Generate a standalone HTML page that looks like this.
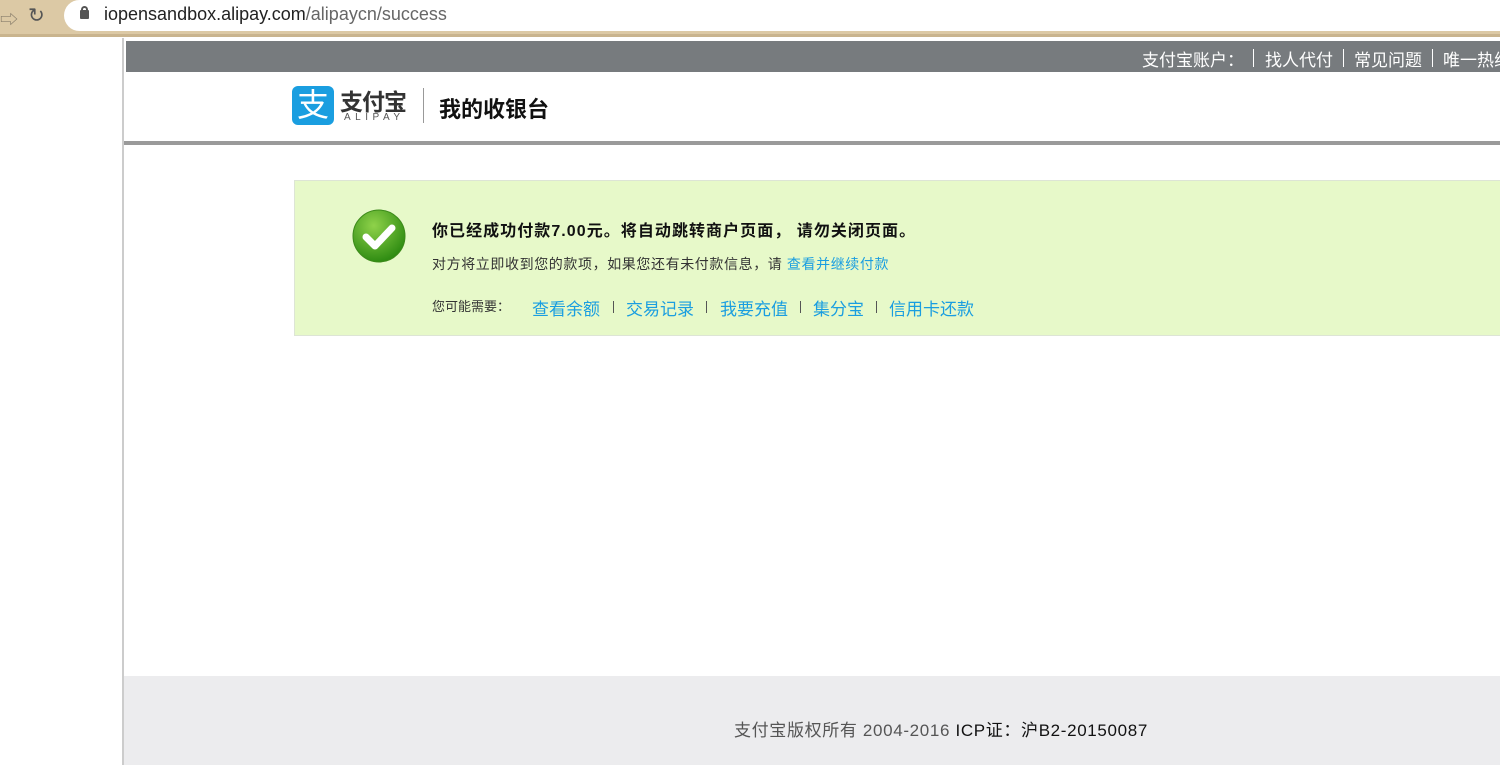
<!DOCTYPE html>
<html><head><meta charset="utf-8"><style>
*{margin:0;padding:0;box-sizing:border-box}
body{width:1500px;height:765px;overflow:hidden;background:#fff;font-family:"Liberation Sans","Noto Sans CJK SC",sans-serif;position:relative}
.abs{position:absolute;white-space:nowrap}
a{color:#1a9ee0;text-decoration:none}
.h{top:46px;font-size:17px;color:#fff}
.hs{top:49px;width:1px;height:18px;background:#fff}
.l{top:295px;font-size:17px;color:#1a9ee0}
.s{top:301px;width:1px;height:12px;background:#555}
</style></head><body>
<div class="abs" style="left:0;top:0;width:1500px;height:34px;background:#dcc9a5"></div>
<div class="abs" style="left:0;top:34px;width:1500px;height:3px;background:#c9b48e"></div>
<div class="abs" style="left:0;top:6px;font-size:18px;color:#8a7f6c">⇨</div>
<div class="abs" style="left:28px;top:3px;font-size:20px;color:#555">↻</div>
<div class="abs" style="left:64px;top:0;width:1440px;height:31px;background:#fff;border-radius:16px 0 0 16px"></div>
<div class="abs" style="left:80px;top:10px;width:9px;height:9px;background:#555;border-radius:1px"></div>
<div class="abs" style="left:81px;top:6px;width:7px;height:7px;border:2px solid #555;border-radius:4px 4px 0 0"></div>
<div class="abs" style="left:104px;top:4px;font-size:18px;color:#222">iopensandbox.alipay.com<span style="color:#666">/alipaycn/success</span></div>

<div class="abs" style="left:122px;top:38px;width:2px;height:727px;background:#ccc"></div>
<div class="abs" style="left:126px;top:41px;width:1374px;height:31px;background:#777b7e"></div>
<div class="abs h" style="left:1142px">支付宝账户：</div>
<div class="abs hs" style="left:1253px"></div>
<div class="abs h" style="left:1265px">找人代付</div>
<div class="abs hs" style="left:1343px"></div>
<div class="abs h" style="left:1354px">常见问题</div>
<div class="abs hs" style="left:1432px"></div>
<div class="abs h" style="left:1443px">唯一热线</div>
<div class="abs" style="left:124px;top:141px;width:1376px;height:4px;background:#9a9a9a"></div>

<div class="abs" style="left:292px;top:86px;width:42px;height:39px;background:#1a9ee0;border-radius:6px;color:#fff;font-size:32px;line-height:39px;text-align:center">支</div>
<div class="abs" style="left:340px;top:83px;font-size:23px;font-weight:bold;color:#333;letter-spacing:-1px">支付宝</div>
<div class="abs" style="left:344px;top:112px;font-size:10px;color:#555;letter-spacing:4.5px">ALIPAY</div>
<div class="abs" style="left:423px;top:88px;width:1px;height:35px;background:#999"></div>
<div class="abs" style="left:439px;top:92px;font-size:22px;font-weight:bold;color:#111">我的收银台</div>

<div class="abs" style="left:294px;top:180px;width:1210px;height:156px;background:#e7f9c9;border:1px solid #dde5d5"></div>
<svg class="abs" style="left:351px;top:209px" width="56" height="56" viewBox="0 0 56 56">
<defs><radialGradient id="g" cx="40%" cy="30%" r="70%"><stop offset="0" stop-color="#8fd24a"/><stop offset="1" stop-color="#2f8c12"/></radialGradient></defs>
<circle cx="28" cy="27" r="26" fill="url(#g)" stroke="#3c8a1a" stroke-width="1"/>
<path d="M15 28 L24 37 L41 19" fill="none" stroke="#fff" stroke-width="7" stroke-linecap="round" stroke-linejoin="round"/>
</svg>
<div class="abs" style="left:432px;top:217px;font-size:16px;font-weight:bold;color:#111;letter-spacing:1.05px">你已经成功付款7.00元。将自动跳转商户页面， 请勿关闭页面。</div>
<div class="abs" style="left:432px;top:254px;font-size:14px;color:#333;letter-spacing:0.6px">对方将立即收到您的款项，如果您还有未付款信息，请 <a>查看并继续付款</a></div>
<div class="abs" style="left:432px;top:296px;font-size:13px;color:#333">您可能需要：</div>
<div class="abs l" style="left:532px">查看余额</div>
<div class="abs s" style="left:613px"></div>
<div class="abs l" style="left:626px">交易记录</div>
<div class="abs s" style="left:706px"></div>
<div class="abs l" style="left:720px">我要充值</div>
<div class="abs s" style="left:800px"></div>
<div class="abs l" style="left:813px">集分宝</div>
<div class="abs s" style="left:876px"></div>
<div class="abs l" style="left:889px">信用卡还款</div>

<div class="abs" style="left:124px;top:676px;width:1376px;height:89px;background:#ececee"></div>
<div class="abs" style="left:734px;top:716px;font-size:17px;color:#555;letter-spacing:0.65px">支付宝版权所有 2004-2016 <span style="color:#111">ICP证：沪B2-20150087</span></div>
</body></html>
